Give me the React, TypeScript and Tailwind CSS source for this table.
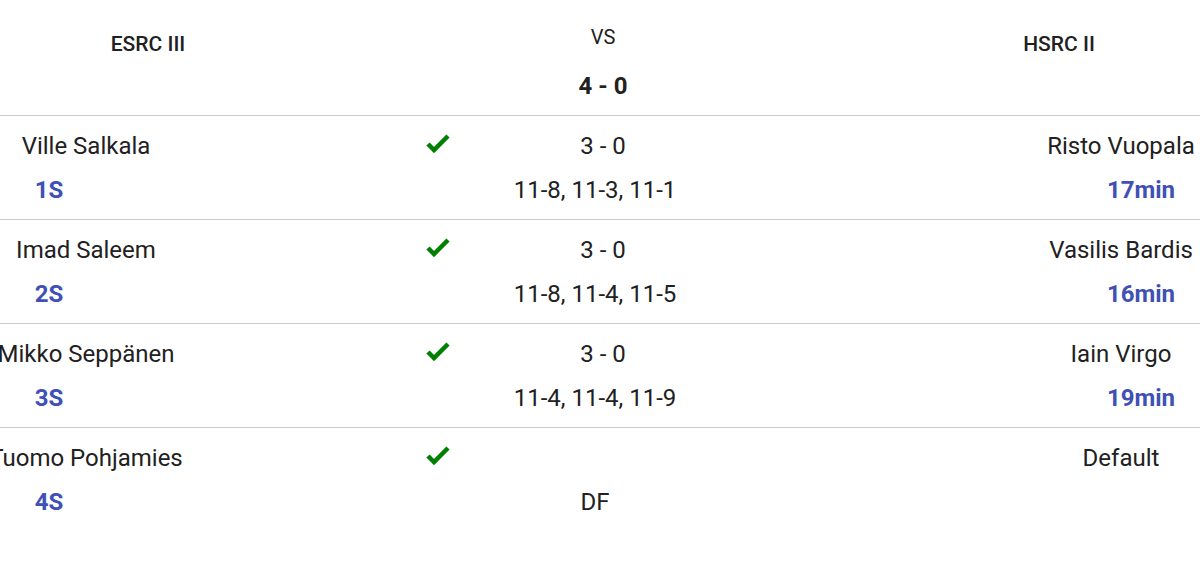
const rows = [
  { home: 'Ville Salkala', seed: '1S', score: '3 - 0', games: '11-8, 11-3, 11-1', away: 'Risto Vuopala', time: '17min' },
  { home: 'Imad Saleem', seed: '2S', score: '3 - 0', games: '11-8, 11-4, 11-5', away: 'Vasilis Bardis', time: '16min' },
  { home: 'Mikko Seppänen', seed: '3S', score: '3 - 0', games: '11-4, 11-4, 11-9', away: 'Iain Virgo', time: '19min' },
  { home: 'Tuomo Pohjamies', seed: '4S', score: '', games: 'DF', away: 'Default', time: '' },
];

function Check() {
  return (
    <svg width="26" height="24" viewBox="0 0 26 24" fill="none">
      <polyline points="3,10 9,16 23,2" stroke="#008000" strokeWidth="4.5" strokeLinejoin="miter" />
    </svg>
  );
}

export default function App() {
  return (
    <div className="w-[1200px] h-[574px] overflow-hidden bg-white text-[#212121] font-['Roboto',sans-serif]">
      {/* header */}
      <div className="grid grid-cols-[296px_159px_296px_1fr_282px] h-[115px]">
        <div className="flex justify-center pt-[29px] text-[21px] leading-[30px] font-medium whitespace-nowrap">ESRC III</div>
        <div />
        <div className="flex flex-col items-center pt-[23px]">
          <div className="text-[20px] leading-[28px]">VS</div>
          <div className="mt-[19px] text-[24px] leading-[32px] font-bold">4 - 0</div>
        </div>
        <div />
        <div className="flex justify-center pt-[29px] text-[21px] leading-[30px] font-medium whitespace-nowrap">HSRC II</div>
      </div>

      {rows.map((r) => (
        <div key={r.seed} className="border-t border-[#cccccc] pt-[10px] pb-[9px] text-[24px]">
          <div className="grid grid-cols-[172px_249px_34px_296px_1fr_158px] h-[40px] items-center">
            <div className="flex justify-center whitespace-nowrap">{r.home}</div>
            <div />
            <div className="flex justify-center">
              <Check />
            </div>
            <div className="flex justify-center whitespace-nowrap">{r.score}</div>
            <div />
            <div className="flex justify-center whitespace-nowrap">{r.away}</div>
          </div>
          <div className="grid grid-cols-[98px_377px_240px_1fr_118px] h-[40px] mt-[4px] items-center">
            <div className="flex justify-center font-bold text-[#3f51b5]">{r.seed}</div>
            <div />
            <div className="flex justify-center whitespace-nowrap">{r.games}</div>
            <div />
            <div className="flex justify-center font-bold text-[#3f51b5]">{r.time}</div>
          </div>
        </div>
      ))}
    </div>
  );
}
